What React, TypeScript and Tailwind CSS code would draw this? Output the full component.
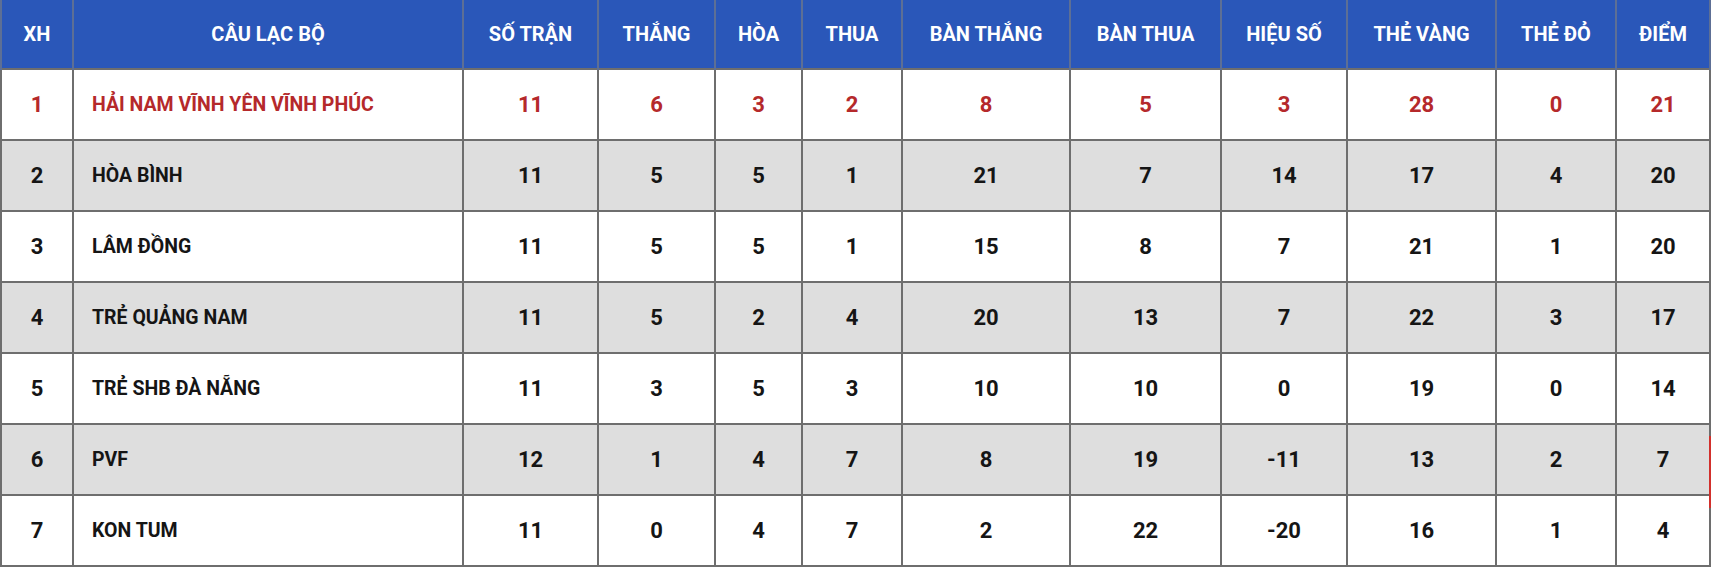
import React from "react";

type Row = {
  pos: number;
  club: string;
  played: number;
  won: number;
  drawn: number;
  lost: number;
  gf: number;
  ga: number;
  gd: number;
  yellow: number;
  red: number;
  pts: number;
};

const ROWS: Row[] = [
  { pos: 1, club: "HẢI NAM VĨNH YÊN VĨNH PHÚC", played: 11, won: 6, drawn: 3, lost: 2, gf: 8, ga: 5, gd: 3, yellow: 28, red: 0, pts: 21 },
  { pos: 2, club: "HÒA BÌNH", played: 11, won: 5, drawn: 5, lost: 1, gf: 21, ga: 7, gd: 14, yellow: 17, red: 4, pts: 20 },
  { pos: 3, club: "LÂM ĐỒNG", played: 11, won: 5, drawn: 5, lost: 1, gf: 15, ga: 8, gd: 7, yellow: 21, red: 1, pts: 20 },
  { pos: 4, club: "TRẺ QUẢNG NAM", played: 11, won: 5, drawn: 2, lost: 4, gf: 20, ga: 13, gd: 7, yellow: 22, red: 3, pts: 17 },
  { pos: 5, club: "TRẺ SHB ĐÀ NẴNG", played: 11, won: 3, drawn: 5, lost: 3, gf: 10, ga: 10, gd: 0, yellow: 19, red: 0, pts: 14 },
  { pos: 6, club: "PVF", played: 12, won: 1, drawn: 4, lost: 7, gf: 8, ga: 19, gd: -11, yellow: 13, red: 2, pts: 7 },
  { pos: 7, club: "KON TUM", played: 11, won: 0, drawn: 4, lost: 7, gf: 2, ga: 22, gd: -20, yellow: 16, red: 1, pts: 4 },
];

const HEADERS = [
  "XH",
  "CÂU LẠC BỘ",
  "SỐ TRẬN",
  "THẮNG",
  "HÒA",
  "THUA",
  "BÀN THẮNG",
  "BÀN THUA",
  "HIỆU SỐ",
  "THẺ VÀNG",
  "THẺ ĐỎ",
  "ĐIỂM",
];

const WIDTHS = [72, 390, 135, 117, 87, 100, 168, 151, 126, 149, 120, 94];

export default function App() {
  return (
    <div
      className="relative h-[568px] w-[1711px] overflow-hidden bg-white"
      style={{ fontFamily: "Roboto, 'Noto Sans', 'Liberation Sans', sans-serif" }}
    >
      <table className="w-[1709px] table-fixed border-collapse">
        <colgroup>
          {WIDTHS.map((w, i) => (
            <col key={i} style={{ width: w }} />
          ))}
        </colgroup>
        <thead>
          <tr className="h-[69px] bg-[#2a57b9]">
            {HEADERS.map((h) => (
              <th
                key={h}
                className="border-x-2 border-[#5d6f95] text-center text-[20px] font-bold text-white"
              >
                {h}
              </th>
            ))}
          </tr>
        </thead>
        <tbody>
          {ROWS.map((r, idx) => {
            const first = r.pos === 1;
            const text = first ? "text-[#b5292b]" : "text-[#151515]";
            const bg = idx % 2 === 1 ? "bg-[#dedede]" : "bg-white";
            const nums = [r.played, r.won, r.drawn, r.lost, r.gf, r.ga, r.gd, r.yellow, r.red, r.pts];
            return (
              <tr key={r.pos} className={`h-[71px] ${bg} ${text}`}>
                <td className="border-2 border-[#6e6e6e] text-center text-[22px] font-bold">
                  {r.pos}
                </td>
                <td className="border-2 border-[#6e6e6e] pl-[18px] text-left text-[19.5px] font-bold">
                  {r.club}
                </td>
                {nums.map((n, i) => (
                  <td
                    key={i}
                    className="border-2 border-[#6e6e6e] text-center text-[22px] font-bold"
                  >
                    {n}
                  </td>
                ))}
              </tr>
            );
          })}
        </tbody>
      </table>
      {/* thin red strip peeking in at the right edge */}
      <div className="absolute right-0 top-[436px] h-[72px] w-[2px] bg-[#d2302c]" />
    </div>
  );
}
